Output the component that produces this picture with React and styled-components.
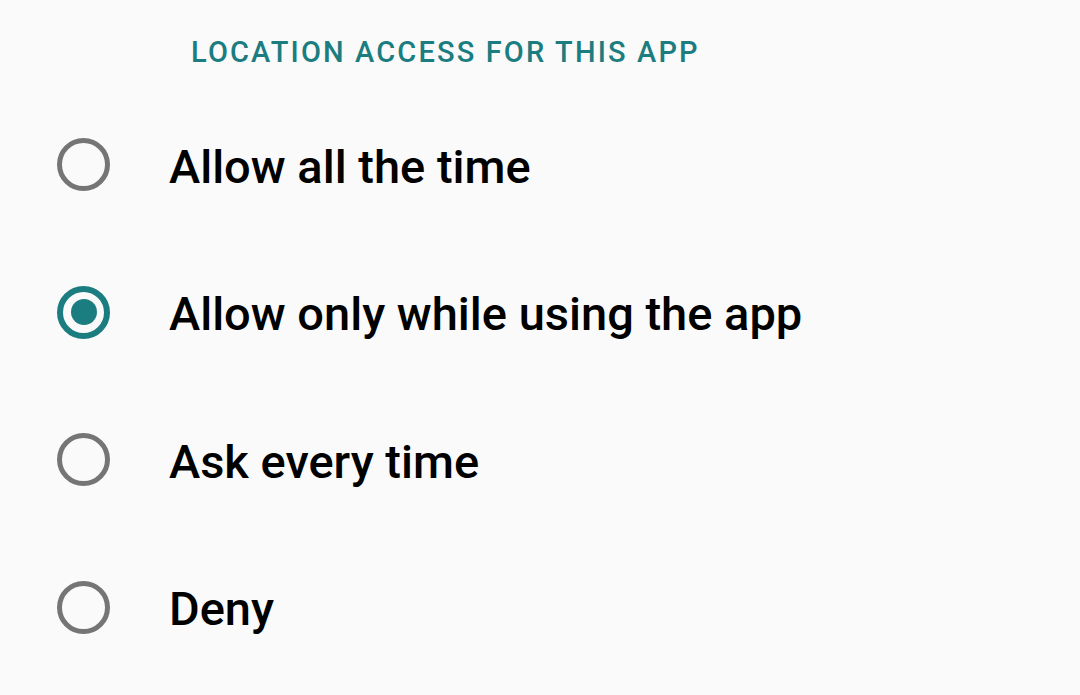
import React, { useState } from "react";
import styled, { createGlobalStyle } from "styled-components";

const Global = createGlobalStyle`
  html, body { margin: 0; padding: 0; background: #fafafa; }
  body { font-family: Roboto, "Noto Sans", sans-serif; }
`;

const Page = styled.div`
  width: 1080px;
  height: 695px;
  background: #fafafa;
  box-sizing: border-box;
  padding-top: 35px;
`;

const Header = styled.div`
  padding-left: 191px;
  font-family: Roboto, sans-serif;
  font-weight: 500;
  font-size: 29px;
  letter-spacing: 2.15px;
  color: #1b7d80;
  line-height: 34px;
  height: 34px;
`;

const List = styled.div`
  display: flex;
  flex-direction: column;
  margin-top: 22px;
`;

const Row = styled.label`
  display: flex;
  align-items: center;
  height: 147.5px;
  padding-left: 57px;
  cursor: pointer;
`;

const Radio = styled.span`
  box-sizing: border-box;
  width: 53px;
  height: 53px;
  border-radius: 50%;
  border: ${(p) => (p.$checked ? "6px solid #1b7d80" : "5px solid #757575")};
  display: flex;
  align-items: center;
  justify-content: center;
  flex-shrink: 0;
`;

const Dot = styled.span`
  width: 26px;
  height: 26px;
  border-radius: 50%;
  background: #1b7d80;
`;

const Label = styled.span`
  margin-left: 59px;
  font-family: Roboto, sans-serif;
  font-size: 47px;
  font-weight: 500;
  color: #000;
  line-height: 56px;
  padding-top: 4px;
`;

const options = [
  "Allow all the time",
  "Allow only while using the app",
  "Ask every time",
  "Deny",
];

export default function App() {
  const [sel, setSel] = useState(1);
  return (
    <Page>
      <Global />
      <Header>LOCATION ACCESS FOR THIS APP</Header>
      <List>
        {options.map((o, i) => (
          <Row key={o} onClick={() => setSel(i)}>
            <Radio $checked={sel === i}>{sel === i && <Dot />}</Radio>
            <Label>{o}</Label>
          </Row>
        ))}
      </List>
    </Page>
  );
}
